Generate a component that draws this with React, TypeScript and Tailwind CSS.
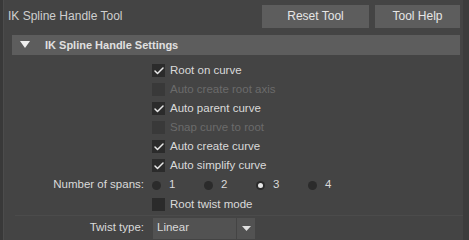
import { Check } from 'lucide-react';

const font = { fontFamily: '"Liberation Sans", Arial, sans-serif' };

function CheckRow({ label, checked, disabled }: { label: string; checked?: boolean; disabled?: boolean }) {
  return (
    <div className="flex items-center h-[19px] pl-[148px]">
      <div
        className={`w-[13px] h-[13px] flex items-center justify-center ${
          disabled ? 'bg-[#393939]' : 'bg-[#2b2b2b]'
        }`}
      >
        {checked && <Check size={12} strokeWidth={3} className="text-[#e8e8e8]" />}
      </div>
      <span className={`ml-[5px] text-[11.5px] ${disabled ? 'text-[#6b6b6b]' : 'text-[#dadada]'}`}>{label}</span>
    </div>
  );
}

function Radio({ label, on }: { label: string; on?: boolean }) {
  return (
    <div className="flex items-center w-[52px]">
      <div className="w-[9px] h-[9px] rounded-full bg-[#2b2b2b] flex items-center justify-center">
        {on && <div className="w-[5px] h-[5px] rounded-full bg-[#e8e8e8]" />}
      </div>
      <span className="ml-[8px] text-[11.5px] text-[#dadada]">{label}</span>
    </div>
  );
}

export default function App() {
  return (
    <div className="w-[469px] h-[240px] bg-[#444444] flex overflow-hidden" style={font}>
      <div className="w-[3px] bg-[#393939]" />
      <div className="w-[1px] bg-[#4c4c4c]" />
      <div className="flex-1 flex flex-col">
        <div className="h-[35px] flex items-center pl-[4px] pr-[3px]">
          <span className="text-[12px] text-[#cfcfcf]">IK Spline Handle Tool</span>
          <div className="ml-auto flex gap-[6px]">
            <button className="w-[107px] h-[23px] bg-[#5d5d5d] text-[12px] text-[#e6e6e6]">Reset Tool</button>
            <button className="w-[85px] h-[23px] bg-[#5d5d5d] text-[12px] text-[#e6e6e6]">Tool Help</button>
          </div>
        </div>
        <div className="ml-[8px] mr-[3px] mt-[2px] h-[22px] bg-[#5d5d5d] flex items-center">
          <svg width="10" height="7" viewBox="0 0 10 7" className="ml-[8px]">
            <polygon points="0,0 10,0 5,7" fill="#f0f0f0" />
          </svg>
          <span className="ml-[15px] text-[11px] font-bold text-[#e0e0e0]">IK Spline Handle Settings</span>
        </div>
        <div className="flex flex-col pt-[6px]">
          <CheckRow label="Root on curve" checked />
          <CheckRow label="Auto create root axis" disabled />
          <CheckRow label="Auto parent curve" checked />
          <CheckRow label="Snap curve to root" disabled />
          <CheckRow label="Auto create curve" checked />
          <CheckRow label="Auto simplify curve" checked />
          <div className="flex items-center h-[20px]">
            <span className="w-[140px] text-right text-[11.5px] text-[#dadada]">Number of spans:</span>
            <div className="ml-[8px] flex">
              <Radio label="1" />
              <Radio label="2" />
              <Radio label="3" on />
              <Radio label="4" />
            </div>
          </div>
          <CheckRow label="Root twist mode" />
          <div className="h-[1px] bg-[#4b4b4b] ml-[11px] mt-[1px]" />
          <div className="flex items-center h-[24px]">
            <span className="w-[140px] text-right text-[11.5px] text-[#dadada]">Twist type:</span>
            <div className="ml-[9px] h-[21px] w-[83px] bg-[#525252] flex items-center pl-[4px] text-[11.5px] text-[#dadada]">
              Linear
            </div>
            <div className="ml-[1px] h-[21px] w-[18px] bg-[#525252] flex items-center justify-center">
              <svg width="9" height="5" viewBox="0 0 9 5">
                <polygon points="0,0 9,0 4.5,5" fill="#e0e0e0" />
              </svg>
            </div>
          </div>
        </div>
      </div>
      <div className="w-[6px] bg-[#3c3c3c]" />
    </div>
  );
}
